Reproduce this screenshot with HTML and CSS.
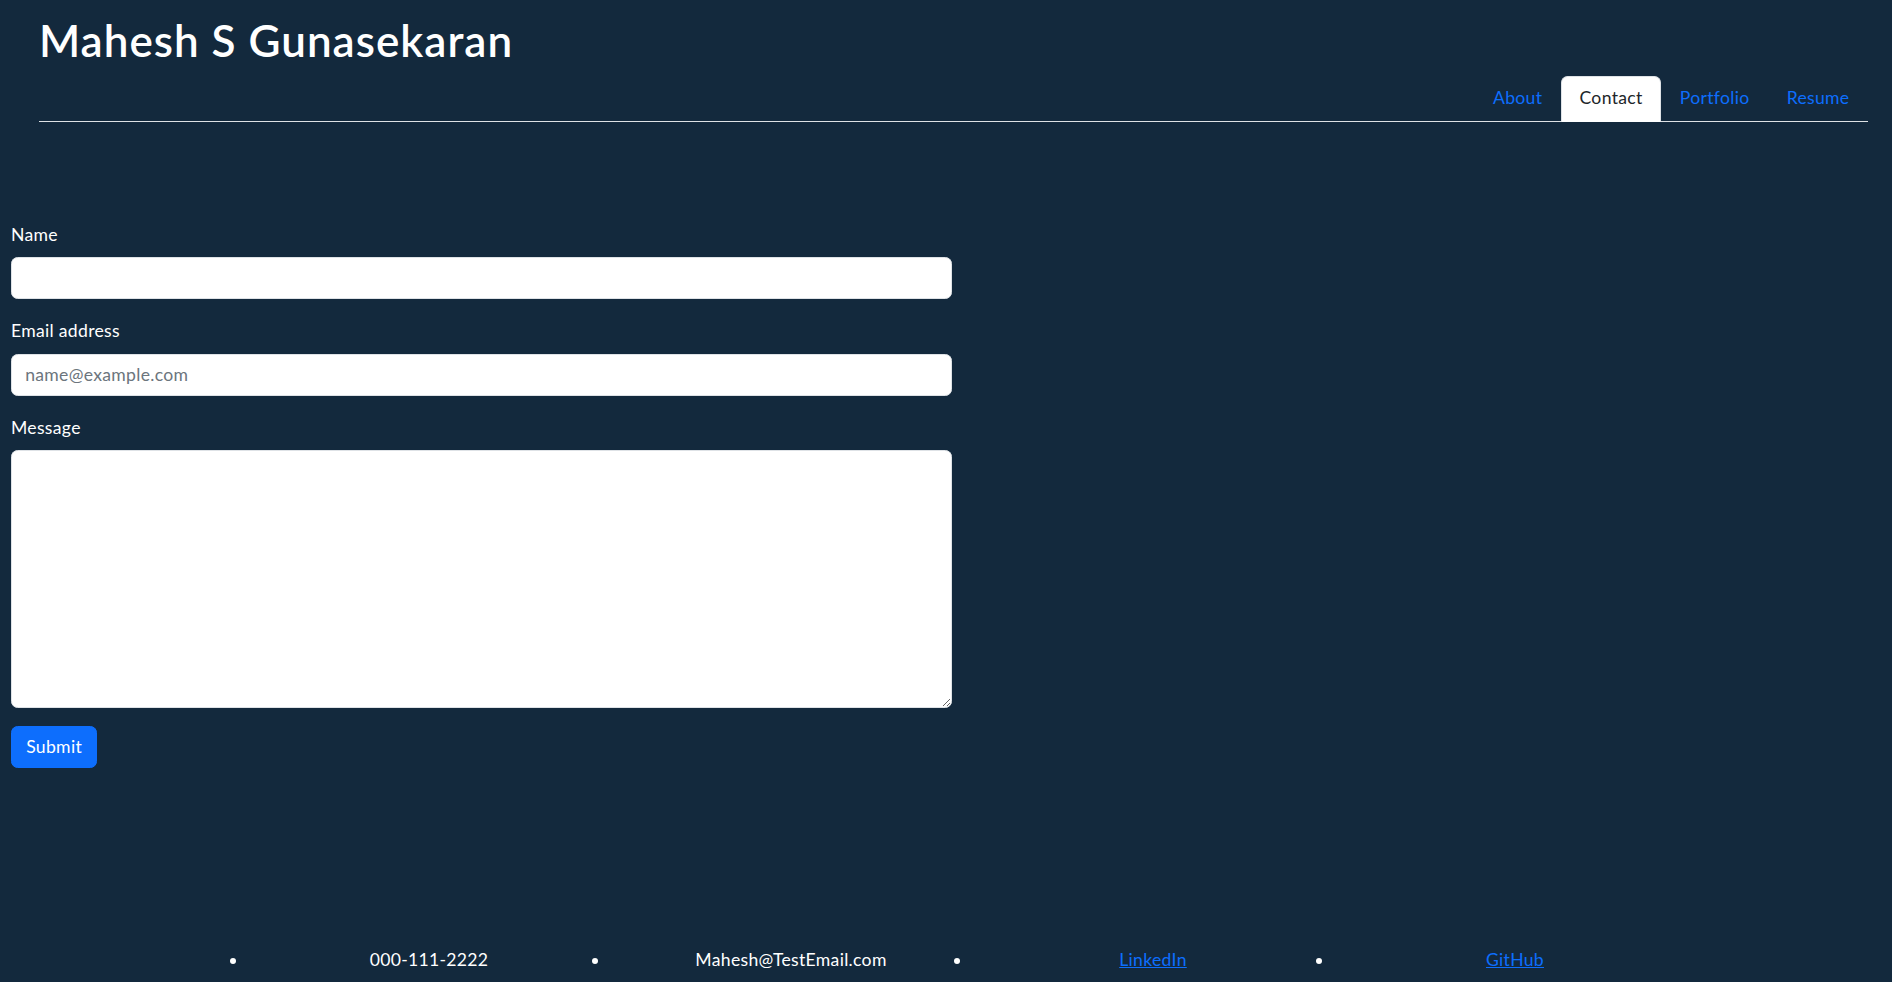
FILE: index.html
```html
<!DOCTYPE html>
<html lang="en">
<head>
<meta charset="utf-8">
<title>Mahesh S Gunasekaran</title>
<link rel="stylesheet" href="styles.css">
</head>
<body>
<header class="site-header">
  <h1 class="site-title">Mahesh S Gunasekaran</h1>
  <nav class="tabs">
    <a class="tab" href="#about">About</a>
    <a class="tab active" href="#contact">Contact</a>
    <a class="tab" href="#portfolio">Portfolio</a>
    <a class="tab" href="#resume">Resume</a>
  </nav>
</header>
<main class="content">
  <form class="contact-form">
    <div class="field">
      <label class="field-label" for="name">Name</label>
      <input class="field-input field-line" id="name" type="text">
    </div>
    <div class="field">
      <label class="field-label" for="email">Email address</label>
      <input class="field-input field-line" id="email" type="email" placeholder="name@example.com">
    </div>
    <div class="field">
      <label class="field-label" for="message">Message</label>
      <textarea class="field-input field-area" id="message"></textarea>
    </div>
    <button class="submit-btn" type="button">Submit</button>
  </form>
</main>
<footer class="site-footer">
  <ul class="footer-list">
    <li class="footer-item">000-111-2222</li>
    <li class="footer-item">Mahesh@TestEmail.com</li>
    <li class="footer-item"><a class="footer-link" href="#">LinkedIn</a></li>
    <li class="footer-item"><a class="footer-link" href="#">GitHub</a></li>
  </ul>
</footer>
</body>
</html>
```
FILE: styles.css
```css
* { box-sizing: border-box; }
html, body { height: 100%; }
body {
  margin: 0;
  min-height: 100vh;
  display: flex;
  flex-direction: column;
  background: #13293d;
  color: #ffffff;
  font-family: "Lato", "Liberation Sans", sans-serif;
  font-size: 17.6px;
  line-height: 1.5;
  letter-spacing: 0.3px;
}
.site-header {
  padding: 14px 24px 0 39px;
}
.site-title {
  margin: 0 0 8.8px 0;
  font-size: 44px;
  font-weight: 600;
  line-height: 1.2;
  letter-spacing: 1px;
}
.tabs {
  display: flex;
  justify-content: flex-end;
  border-bottom: 1px solid #dee2e6;
}
.tab {
  display: block;
  padding: 8.8px 17.6px;
  margin-bottom: -1px;
  border: 1px solid transparent;
  border-top-left-radius: 6.6px;
  border-top-right-radius: 6.6px;
  color: #0d6efd;
  text-decoration: none;
}
.tab.active {
  background: #ffffff;
  color: #212529;
  border-color: #dee2e6 #dee2e6 #ffffff;
}
.content {
  padding: 100px 0 0 11px;
}
.contact-form {
  width: 941px;
}
.field {
  margin-bottom: 19.6px;
}
.field-label {
  display: block;
  margin-bottom: 8.8px;
}
.field-input {
  display: block;
  width: 100%;
  padding: 6.6px 13.2px;
  font: inherit;
  font-size: 17.6px;
  line-height: 1.5;
  letter-spacing: 0.3px;
  color: #212529;
  background: #ffffff;
  border: 1px solid #dee2e6;
  border-radius: 6.6px;
  outline: none;
}
.field-line {
  height: 42px;
}
.field-input::placeholder {
  color: #6c757d;
}
.field-area {
  height: 258px;
  resize: vertical;
}
.field:last-of-type {
  margin-bottom: 18px;
}
.submit-btn {
  display: inline-block;
  padding: 6.6px 14.2px;
  font: inherit;
  font-size: 17.6px;
  line-height: 1.5;
  letter-spacing: 0.3px;
  color: #ffffff;
  background: #0d6efd;
  border: 1px solid #0d6efd;
  border-radius: 6.6px;
}
.site-footer {
  margin-top: auto;
  padding-bottom: 9px;
}
.footer-list {
  display: flex;
  margin: 0;
  padding: 0 0 0 248px;
  list-style: disc outside;
}
.footer-item {
  flex: 0 0 362px;
  text-align: center;
}
.footer-link {
  color: #0d6efd;
  text-decoration: underline;
}
```
